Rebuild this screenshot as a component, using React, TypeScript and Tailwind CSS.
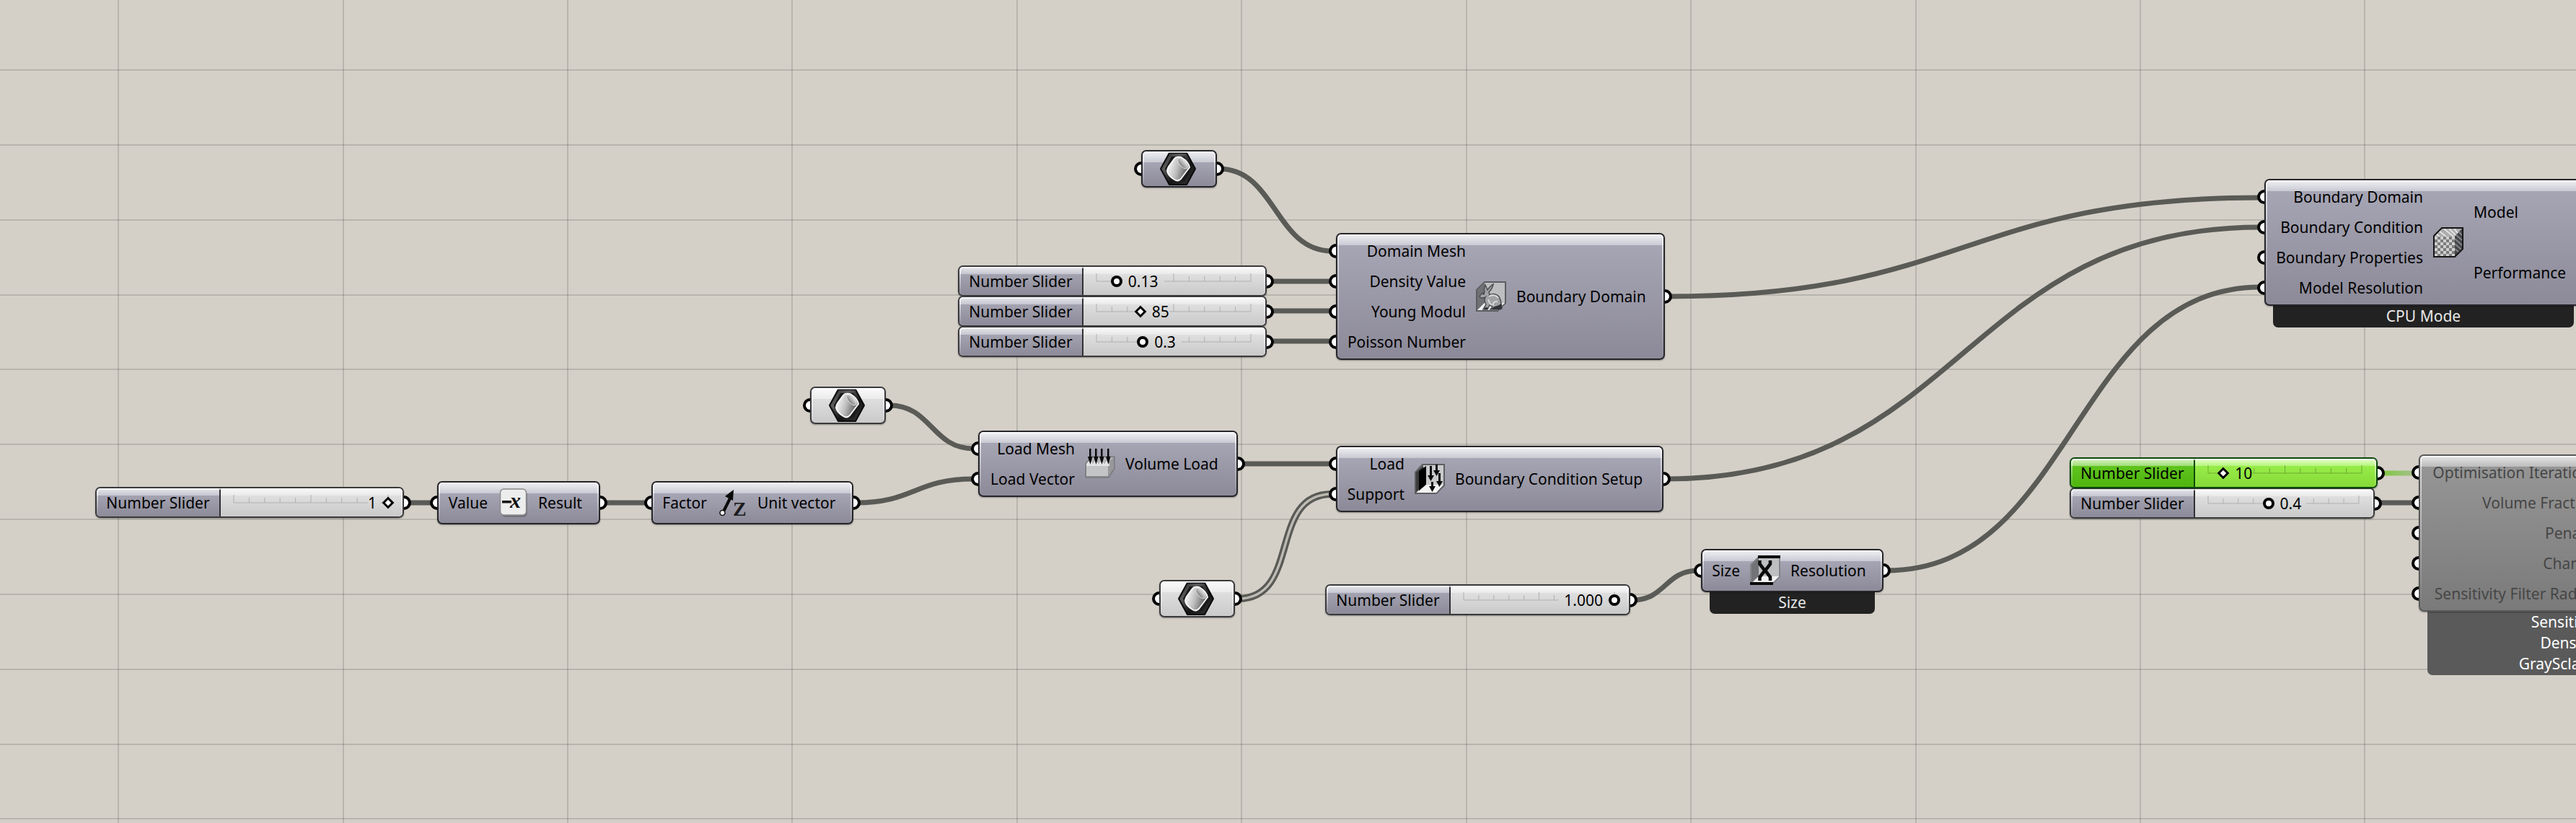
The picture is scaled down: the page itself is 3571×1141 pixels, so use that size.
import { useState, type ReactNode } from "react";

const GRID_X = [164, 476, 787, 1098, 1410, 1721, 2033, 2344, 2656, 2967, 3278];
const GRID_Y = [97, 201, 305, 409, 512, 616, 720, 824, 928, 1032, 1135];

type Wire = { from: [number, number]; to: [number, number]; bend?: number; kind?: "list" | "selected" };

const WIRES: Wire[] = [
  { from: [1690, 234], to: [1846, 348] },
  { from: [1760, 390], to: [1846, 390] },
  { from: [1760, 431], to: [1846, 431] },
  { from: [1760, 473], to: [1846, 473] },
  { from: [1233, 562], to: [1350, 622] },
  { from: [1186, 697], to: [1350, 664] },
  { from: [564, 697], to: [602, 697] },
  { from: [836, 697], to: [899, 697] },
  { from: [1720, 643], to: [1846, 643] },
  { from: [1716, 830], to: [1846, 685], bend: 0.68, kind: "list" },
  { from: [2263, 832], to: [2354, 791] },
  { from: [2312, 411], to: [3134, 274] },
  { from: [2309, 664], to: [3134, 315] },
  { from: [2615, 791], to: [3134, 398] },
  { from: [3300, 656], to: [3349, 656], kind: "selected" },
  { from: [3296, 697], to: [3349, 697] },
];

function wirePath({ from: [x1, y1], to: [x2, y2], bend = 0.5 }: Wire) {
  const c = (x2 - x1) * bend;
  return `M${x1} ${y1}C${x1 + c} ${y1} ${x2 - c} ${y2} ${x2} ${y2}`;
}

function CanvasBackdrop() {
  return (
    <svg className="absolute inset-0 h-full w-full" aria-hidden="true">
      <defs>
        <linearGradient id="selectedWire" gradientUnits="userSpaceOnUse" x1="3300" x2="3349" y1="0" y2="0">
          <stop offset="0" stopColor="#7fc83c" />
          <stop offset="1" stopColor="#a6bf90" />
        </linearGradient>
      </defs>
      <g stroke="#000" strokeOpacity="0.13" strokeWidth="2">
        {GRID_X.map((x) => (
          <line key={x} x1={x} x2={x} y1="0" y2="100%" />
        ))}
        {GRID_Y.map((y) => (
          <line key={y} x1="0" x2="100%" y1={y} y2={y} />
        ))}
      </g>
      <g fill="none">
        {WIRES.map((w, i) =>
          w.kind === "list" ? (
            <g key={i}>
              <path d={wirePath(w)} stroke="#5a5b56" strokeWidth="10" />
              <path d={wirePath(w)} stroke="#d4d0c8" strokeWidth="3" />
              <path d={wirePath(w)} stroke="#a5a39c" strokeWidth="1" />
            </g>
          ) : (
            <path key={i} d={wirePath(w)} stroke={w.kind === "selected" ? "url(#selectedWire)" : "#5a5b56"} strokeWidth="7" />
          ),
        )}
      </g>
    </svg>
  );
}

function Grip({ side }: { side: "left" | "right" }) {
  const shape =
    side === "left"
      ? "-left-3 rounded-l-full border-r-0"
      : "-right-3 rounded-r-full border-l-0";
  return <span className={`absolute top-1/2 h-5 w-[10px] -translate-y-1/2 border-4 border-black bg-white ${shape}`} />;
}

const RIM =
  "after:pointer-events-none after:absolute after:inset-0 after:rounded-[5px] after:border-2 after:border-white/70 after:[mask-image:linear-gradient(black,transparent)]";

const SKIN = {
  violet:
    "border-[#26262b] bg-[linear-gradient(#f1f1f5,#c9c9d3_15px,#a6a5b4_15px,#8c8a98)]",
  silver:
    "border-[#3a3a3d] bg-[linear-gradient(#fbfbfb,#ebebeb_15px,#dedede_15px,#cacaca)]",
  locked:
    "border-[#5a5a5a] bg-[linear-gradient(#e6e6e6,#bcbcbc_15px,#959595_15px,#7a7a7a)]",
};

type NodeProps = {
  place: string;
  inputs: string[];
  inputsWidth: string;
  outputs?: string[];
  icon?: ReactNode;
  skin?: keyof typeof SKIN;
  footer?: ReactNode;
};

function Component({ place, inputs, inputsWidth, outputs = [], icon, skin = "violet", footer }: NodeProps) {
  return (
    <section className={`absolute ${place}`}>
      <div
        className={`relative flex min-h-[60px] items-center rounded-[7px] border-2 py-[2px] shadow-[0_1px_2px_rgba(0,0,0,0.35)] ${SKIN[skin]} ${RIM}`}
      >
        <div className={`flex shrink-0 flex-col ${inputsWidth}`}>
          {inputs.map((name) => (
            <div
              key={name}
              className={`relative flex h-[42px] items-center justify-end whitespace-nowrap ${skin === "locked" ? "text-[#464646]" : ""}`}
            >
              <Grip side="left" />
              {name}
            </div>
          ))}
        </div>
        {icon && <div className="mx-[14px] h-[42px] w-[42px] shrink-0">{icon}</div>}
        <div className="flex flex-1 flex-col self-stretch">
          {outputs.map((name) => (
            <div key={name} className="relative flex flex-1 items-center whitespace-nowrap">
              {name}
              <Grip side="right" />
            </div>
          ))}
        </div>
      </div>
      {footer}
    </section>
  );
}

function Footer({ children }: { children: string }) {
  return (
    <div className="mx-3 -mt-[2px] flex h-8 items-center justify-center rounded-b-[7px] bg-[#222] text-[#e8e8e8]">
      {children}
    </div>
  );
}

function HexMeshIcon() {
  return (
    <svg viewBox="0 0 50 46" className="mr-1 h-[46px] w-[50px]" aria-hidden="true">
      <defs>
        <linearGradient id="hexRim" x1="0" y1="0" x2="1" y2="1">
          <stop offset="0" stopColor="#1c1c1c" />
          <stop offset="0.3" stopColor="#5c5c5c" />
          <stop offset="0.6" stopColor="#141414" />
          <stop offset="1" stopColor="#3a3a3a" />
        </linearGradient>
        <linearGradient id="tube" x1="0" y1="0.35" x2="1" y2="0.65">
          <stop offset="0" stopColor="#fafafa" />
          <stop offset="0.45" stopColor="#bdbdbd" />
          <stop offset="0.85" stopColor="#6a6a6a" />
          <stop offset="1" stopColor="#9a9a9a" />
        </linearGradient>
        <linearGradient id="bore" x1="0" y1="0" x2="1" y2="0">
          <stop offset="0" stopColor="#7a7a7a" />
          <stop offset="1" stopColor="#e4e4e4" />
        </linearGradient>
      </defs>
      <path d="M13 1h24l12 22-12 22H13L1 23Z" fill="url(#hexRim)" stroke="#0b0b0b" strokeWidth="2" strokeLinejoin="round" />
      <path d="M16 6h18l9 17-9 17H16L7 23Z" fill="#1a1a1a" />
      <path d="M20 9C22 6.500 27 6 31 8c5 3 9 8 10 13L29 37c-3 3-6 3-9 1-5-3-9-7-10-12 0-2 1-4 2-6Z" fill="url(#tube)" stroke="#f7f7f7" strokeWidth="2" strokeLinejoin="round" />
      <ellipse cx="31.500" cy="15.500" rx="4.500" ry="9" transform="rotate(-42 31.500 15.500)" fill="url(#bore)" stroke="#dedede" strokeWidth="1" />
    </svg>
  );
}

function NegativeIcon() {
  return (
    <svg viewBox="0 0 42 42" className="h-full w-full" aria-hidden="true">
      <rect x="5" y="4" width="36" height="37" rx="6" fill="#55535f" opacity="0.5" />
      <rect x="3.500" y="2" width="36" height="36" rx="5" fill="#ededed" stroke="#8b8b8b" strokeWidth="1.500" />
      <rect x="6" y="18" width="13" height="3.500" fill="#111" />
      <text x="17" y="28" className="fill-[#111] font-['Liberation_Serif',serif] text-[30px] font-bold italic">x</text>
    </svg>
  );
}

function UnitZIcon() {
  return (
    <svg viewBox="0 0 42 42" className="h-full w-full overflow-visible" aria-hidden="true">
      <path d="M9 33 19 13" stroke="#0a0a0a" strokeWidth="4" />
      <path d="M23 3 22 18 11 12Z" fill="#0a0a0a" />
      <circle cx="7.500" cy="35" r="3.500" fill="#fff" stroke="#111" strokeWidth="1.500" />
      <text x="22" y="39" className="fill-[#1c1c20] font-['Liberation_Serif',serif] text-[28px] font-bold">Z</text>
    </svg>
  );
}

function VolumeLoadIcon() {
  return (
    <svg viewBox="0 0 42 42" className="h-full w-full" aria-hidden="true">
      <path d="M1 20 10 11h31v17l-8 12H1Z" fill="#8d8d90" stroke="#6f6f75" />
      <path d="M3 19 10 12h30l-8 8H3Z" fill="#b4b4b6" />
      <path d="M2 21h30v17H2Z" fill="#c3c4c6" />
      <path d="M32 21 40 12v15l-8 11Z" fill="#98989b" />
      <path d="m2 21 6-5 3 5 4-5 4 5 4-5 4 5 4-5 3 5v3H2Z" fill="#e4e4e6" />
      {[7, 15, 23, 32].map((x) => (
        <g key={x} fill="#0a0a0a">
          <path d={`M${x - 1} 0h2.500v13h-2.500Z`} />
          <path d={`M${x - 3} 11h6.500l-3 11Z`} />
        </g>
      ))}
    </svg>
  );
}

function BunnyIcon() {
  return (
    <svg viewBox="0 0 42 42" className="h-full w-full" aria-hidden="true">
      <path d="M12 1h29v29L30 41H1V12Z" fill="#bcbec0" stroke="#5c5d61" strokeWidth="2" />
      <path d="M2 12.500 12 2v28L2 40Z" fill="#6f7174" />
      <path d="m2 40 10-10h28L30 40Z" fill="#f1f1f1" />
      <path d="M12 15c-1-4 0-8 1-10l3 7c3-4 6-7 8-8-1 5-4 9-6 11 1 2 1 4 0 5 4-4 12-3 15 3 2 5 2 9 3 13 0 2-2 3-4 3H20l3-4-4-2-3 6h-6l4-7c-2-4-3-6-1-10-3 2-7 1-8-1 0-2 4-4 7-6Z" fill="#a0a2a4" stroke="#505154" strokeWidth="1.600" />
      <path d="M18 21c4-3 10-2 13 2M24 34c-1-4 2-7 6-6M17 25c1 4 2 6 5 8" fill="none" stroke="#dcdddd" strokeWidth="1.800" />
      <path d="M22 38c3-4 8-3 13-7l1 7-3 1H22Z M11 39c2-4 4-3 6-2l-1 2Z" fill="#323336" />
      <circle cx="11" cy="17.500" r="1" fill="#222" />
    </svg>
  );
}

function ConditionIcon() {
  return (
    <svg viewBox="0 0 42 42" className="h-full w-full" aria-hidden="true">
      <path d="M11 1h30v29L30 41H1V12Z" fill="#c9cacb" stroke="#5d5e62" strokeWidth="2" />
      <path d="M2 12 12 2v28L2 40Z" fill="#3b3b3d" />
      <path d="M6 10 16 3v26L6 38Z" fill="#000" />
      <path d="m3 40 13-11h24L30 40Z" fill="#f3f3f3" />
      <g fill="#0a0a0a">
        <path d="M21 3h3v13h3l-4.500 8-4.500-8h3Z" />
        <path d="M29 1h3v8h3l-4.500 8L26 9h3Z" />
        <path d="M33 13h3v11h3l-4.500 8-4.500-8h3Z" />
        <path d="M23 25h3v6h3l-4.500 8-4.500-8h3Z" />
      </g>
    </svg>
  );
}

function SizeIcon() {
  return (
    <svg viewBox="0 0 42 42" className="h-full w-full" aria-hidden="true">
      <path d="M12 2h29v28L31 39H1V13Z" fill="#bdbfc1" stroke="#77787c" strokeWidth="1.500" />
      <path d="M2 13 12 3v26L2 38Z" fill="#717376" />
      <path d="m3 38 9-9h28l-9 9Z" fill="#f2f2f2" />
      <path d="M11 0h32v4H11Z" fill="#0a0a0a" />
      <path d="M0 37h32v4H0Z" fill="#0a0a0a" />
      <path d="M13.500 7v5l7 9-7 9v5M28 7v5l-7 9 7 9v5" fill="none" stroke="#0a0a0a" strokeWidth="4.500" />
    </svg>
  );
}

function VoxelIcon() {
  const dots = [0, 1, 2, 3, 4, 5, 6];
  return (
    <svg viewBox="0 0 42 42" className="h-full w-full" aria-hidden="true">
      <path d="M12 1h29v29L30 41H1V12Z" fill="#7c7c7c" />
      <path d="M12 1h29L30 13H1v-1Z" fill="#adadad" />
      <path d="M41 1v29L30 41V13Z" fill="#444548" />
      <path d="M8 5 18 13M15 2l13 11M22 2l9 9M29 2l5 6M4 9l5 4" stroke="#e2e2e2" strokeWidth="2" />
      <path d="m30 16 10 9M30 23l9 8M30 30l6 5M32 11l8 7M36 7l4 4" stroke="#838487" strokeWidth="2" />
      {dots.flatMap((r) =>
        dots
          .filter((c) => (r + c) % 2 === 0)
          .map((c) => <rect key={`${r}-${c}`} x={2 + c * 4} y={13 + r * 4} width="4" height="4" fill="#cfcfcf" />),
      )}
      <path d="M12 1h29v29L30 41H1V12Z" fill="none" stroke="#161616" strokeWidth="2" />
    </svg>
  );
}

const THUMB_BASE =
  "absolute top-1/2 h-4 -translate-y-1/2 appearance-none bg-transparent [&::-webkit-slider-thumb]:appearance-none [&::-webkit-slider-thumb]:border-black [&::-webkit-slider-thumb]:bg-white";
const THUMB = {
  round:
    "-inset-x-2 w-[calc(100%+16px)] [&::-webkit-slider-thumb]:size-4 [&::-webkit-slider-thumb]:rounded-full [&::-webkit-slider-thumb]:border-4",
  diamond:
    "-inset-x-[6px] w-[calc(100%+12px)] [&::-webkit-slider-thumb]:size-3 [&::-webkit-slider-thumb]:rotate-45 [&::-webkit-slider-thumb]:border-3",
};

type SliderProps = {
  id: string;
  text: string;
  min: number;
  max: number;
  step: number;
  value: number;
  thumb: keyof typeof THUMB;
  selected?: boolean;
  className?: string;
};

function NumberSlider({ id, text, min, max, step, value, thumb, selected, className = "" }: SliderProps) {
  const [current, setCurrent] = useState(value);
  const ratio = (current - min) / (max - min);
  const shown = current === value ? text : String(current);
  const textOnLeft = ratio > 0.8;
  const knob = ratio * 100;
  const room = shown.length * 6 + 2;
  const gap = textOnLeft ? [knob - 5 - room, knob - 5] : [knob, knob + 5 + room];
  const labelSkin = selected
    ? "border-[#0b4a0b] bg-[linear-gradient(#dcf5c6,#9fdd76_10px,#60c41f_10px,#4fb40d)]"
    : "border-[#303034] bg-[linear-gradient(#e6e6ec,#c6c6d0_10px,#a4a3b1_10px,#8c8a98)]";
  const trackSkin = selected
    ? "bg-[linear-gradient(#eaffd2,#b4f57c_10px,#98ec49_10px,#86da37)]"
    : "bg-[linear-gradient(#fbfbfb,#e9e9e9_10px,#dfdfdf_10px,#c9c9c9)]";
  const frame = selected ? "z-10 border-[#0b4a0b]" : "border-[#3a3a3d]";
  const tone = selected ? "#6dac35" : "#b0b0b0";
  return (
    <div className={`relative flex h-[43px] rounded-[7px] border-2 shadow-[0_1px_2px_rgba(0,0,0,0.35)] ${frame} ${RIM} ${className}`}>
      <label htmlFor={id} className={`flex w-[172px] shrink-0 items-center justify-center whitespace-nowrap rounded-l-[5px] border-r-2 ${labelSkin}`}>
        Number Slider
      </label>
      <div className={`flex flex-1 items-center rounded-r-[5px] pr-5 pl-[18px] ${trackSkin}`}>
        <div className="relative h-6 flex-1">
          <svg className="absolute inset-0 h-full w-full overflow-visible" aria-hidden="true">
            <g stroke={tone} strokeWidth="1">
              <line x1="0" x2={`${Math.max(gap[0], 0)}%`} y1="12" y2="12" />
              {gap[1] < 100 && <line x1={`${gap[1]}%`} x2="100%" y1="12" y2="12" />}
              {Array.from({ length: 11 }, (_, i) => i * 10)
                .filter((p) => p < gap[0] || p > gap[1])
                .map((p) => (
                  <line key={p} x1={`${p}%`} x2={`${p}%`} y1={p % 50 === 0 ? 1 : 5} y2="12" />
                ))}
            </g>
          </svg>
          <input
            id={id}
            type="range"
            min={min}
            max={max}
            step={step}
            value={current}
            onChange={(e) => setCurrent(Number(e.target.value))}
            className={`${THUMB_BASE} ${THUMB[thumb]}`}
          />
          <output
            htmlFor={id}
            className={`pointer-events-none absolute top-1/2 -translate-y-1/2 ${textOnLeft ? "pr-4" : "pl-4"}`}
            style={textOnLeft ? { right: `${100 - knob}%` } : { left: `${knob}%` }}
          >
            {shown}
          </output>
        </div>
      </div>
      <Grip side="right" />
    </div>
  );
}

function MeshParam({ place, skin, label }: { place: string; skin: "violet" | "silver"; label: string }) {
  return (
    <section aria-label={label} className={`absolute ${place}`}>
      <div
        className={`relative flex h-[52px] items-center justify-center rounded-[7px] border-2 shadow-[0_1px_2px_rgba(0,0,0,0.35)] ${SKIN[skin]} ${RIM}`}
      >
        <Grip side="left" />
        <HexMeshIcon />
        <Grip side="right" />
      </div>
    </section>
  );
}

export default function App() {
  return (
    <main className="relative min-h-screen w-full overflow-hidden bg-[#d4d0c8] font-['Noto_Sans','Open_Sans',sans-serif] text-[21px] leading-7 text-black">
      <CanvasBackdrop />

      <MeshParam place="left-[1582px] top-[208px] w-[105px]" skin="violet" label="Domain mesh" />
      <MeshParam place="left-[1123px] top-[536px] w-[105px]" skin="silver" label="Load mesh" />
      <MeshParam place="left-[1607px] top-[804px] w-[105px]" skin="silver" label="Support mesh" />

      <div className="absolute left-[1328px] top-[368px] flex w-[428px] flex-col">
        <NumberSlider id="density" text="0.13" min={0} max={1} step={0.01} value={0.13} thumb="round" />
        <NumberSlider id="young" text="85" min={0} max={300} step={1} value={85} thumb="diamond" className="-mt-px" />
        <NumberSlider id="poisson" text="0.3" min={0} max={1} step={0.1} value={0.3} thumb="round" className="-mt-px" />
      </div>

      <div className="absolute left-[132px] top-[675px] w-[428px]">
        <NumberSlider id="sign" text="1" min={0} max={1} step={1} value={1} thumb="diamond" />
      </div>

      <div className="absolute left-[1837px] top-[810px] w-[423px]">
        <NumberSlider id="size" text="1.000" min={0} max={1} step={0.001} value={1} thumb="round" />
      </div>

      <div className="absolute left-[2869px] top-[634px] flex flex-col">
        <NumberSlider id="iterations" text="10" min={0} max={100} step={1} value={10} thumb="diamond" selected className="w-[427px]" />
        <NumberSlider id="fraction" text="0.4" min={0} max={1} step={0.1} value={0.4} thumb="round" className="-mt-px w-[423px]" />
      </div>

      <Component
        place="left-[606px] top-[667px] w-[226px]"
        inputs={["Value"]}
        inputsWidth="w-[68px]"
        icon={<NegativeIcon />}
        outputs={["Result"]}
      />
      <Component
        place="left-[903px] top-[667px] w-[280px]"
        inputs={["Factor"]}
        inputsWidth="w-[75px]"
        icon={<UnitZIcon />}
        outputs={["Unit vector"]}
      />
      <Component
        place="left-[1356px] top-[597px] w-[360px]"
        inputs={["Load Mesh", "Load Vector"]}
        inputsWidth="w-[132px]"
        icon={<VolumeLoadIcon />}
        outputs={["Volume Load"]}
      />
      <Component
        place="left-[1852px] top-[323px] w-[456px]"
        inputs={["Domain Mesh", "Density Value", "Young Modul", "Poisson Number"]}
        inputsWidth="w-[178px]"
        icon={<BunnyIcon />}
        outputs={["Boundary Domain"]}
      />
      <Component
        place="left-[1852px] top-[618px] w-[454px]"
        inputs={["Load", "Support"]}
        inputsWidth="w-[93px]"
        icon={<ConditionIcon />}
        outputs={["Boundary Condition Setup"]}
      />
      <Component
        place="left-[2358px] top-[761px] w-[253px]"
        inputs={["Size"]}
        inputsWidth="w-[52px]"
        icon={<SizeIcon />}
        outputs={["Resolution"]}
        footer={<Footer>Size</Footer>}
      />
      <Component
        place="left-[3139px] top-[248px] w-[441px]"
        inputs={["Boundary Domain", "Boundary Condition", "Boundary Properties", "Model Resolution"]}
        inputsWidth="w-[218px]"
        icon={<VoxelIcon />}
        outputs={["Model", "Performance"]}
        footer={<Footer>CPU Mode</Footer>}
      />
      <Component
        place="left-[3353px] top-[630px] w-[466px]"
        skin="locked"
        inputs={["Optimisation Iterations", "Volume Fraction", "Penalty", "Change", "Sensitivity Filter Radius"]}
        inputsWidth="w-[246px]"
        footer={
          <div className="mx-3 rounded-b-[7px] bg-[#5a5a5a] pb-px text-center text-white">
            <p className="leading-[29px]">Sensitivity Filter</p>
            <p className="leading-[29px]">Density Filter</p>
            <p className="leading-[29px]">GraySclale Filtering</p>
          </div>
        }
      />
    </main>
  );
}
